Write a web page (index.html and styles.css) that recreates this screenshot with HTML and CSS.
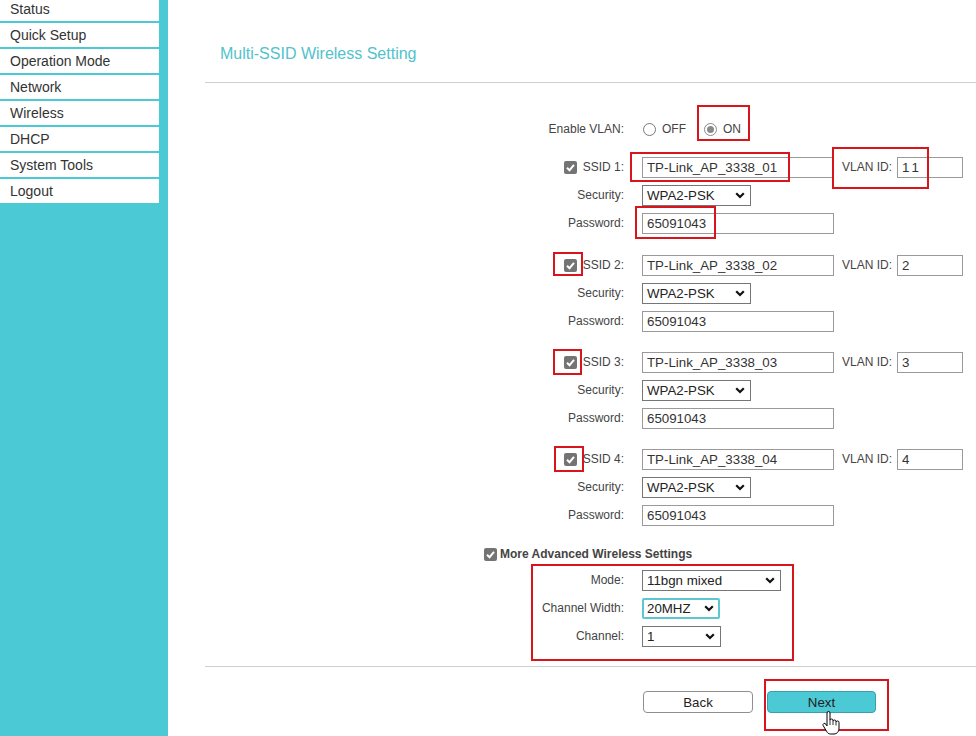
FILE: index.html
```html
<!DOCTYPE html>
<html>
<head>
<meta charset="utf-8">
<title>Multi-SSID Wireless Setting</title>
<link rel="stylesheet" href="styles.css">
</head>
<body>
<div class="page">
  <aside class="sidebar">
    <ul class="menu">
      <li>Status</li>
      <li>Quick Setup</li>
      <li>Operation Mode</li>
      <li>Network</li>
      <li>Wireless</li>
      <li>DHCP</li>
      <li>System Tools</li>
      <li>Logout</li>
    </ul>
  </aside>
  <main class="main">
    <h1 class="title">Multi-SSID Wireless Setting</h1>
    <div class="rule"></div>
    <div class="form">
      <div class="row">
        <div class="lbl">Enable VLAN:</div>
        <div class="field radios">
          <span class="radio"></span><span class="rtext">OFF</span>
          <span class="radio on"></span><span class="rtext">ON</span>
        </div>
      </div>

      <div class="group g1">
        <div class="row">
          <div class="lbl"><span class="cb"><svg viewBox="0 0 13 13" width="13" height="13"><path d="M3 6.8 L5.5 9.2 L10 3.8" fill="none" stroke="#fff" stroke-width="2"/></svg></span><span>SSID 1:</span></div>
          <div class="field"><input class="txt" value="TP-Link_AP_3338_01"></div>
          <div class="vlan-lbl">VLAN ID:</div>
          <input class="txt vlan spaced" value="11">
        </div>
        <div class="row">
          <div class="lbl">Security:</div>
          <div class="field"><div class="sel sec"><span>WPA2-PSK</span><svg class="chev" viewBox="0 0 10 7" width="10" height="7"><path d="M1.2 1.2 L5 5 L8.8 1.2" fill="none" stroke="#111" stroke-width="2.2"/></svg></div></div>
        </div>
        <div class="row">
          <div class="lbl">Password:</div>
          <div class="field"><input class="txt" value="65091043"></div>
        </div>
      </div>

      <div class="group g2">
        <div class="row">
          <div class="lbl"><span class="cb"><svg viewBox="0 0 13 13" width="13" height="13"><path d="M3 6.8 L5.5 9.2 L10 3.8" fill="none" stroke="#fff" stroke-width="2"/></svg></span><span>SSID 2:</span></div>
          <div class="field"><input class="txt" value="TP-Link_AP_3338_02"></div>
          <div class="vlan-lbl">VLAN ID:</div>
          <input class="txt vlan" value="2">
        </div>
        <div class="row">
          <div class="lbl">Security:</div>
          <div class="field"><div class="sel sec"><span>WPA2-PSK</span><svg class="chev" viewBox="0 0 10 7" width="10" height="7"><path d="M1.2 1.2 L5 5 L8.8 1.2" fill="none" stroke="#111" stroke-width="2.2"/></svg></div></div>
        </div>
        <div class="row">
          <div class="lbl">Password:</div>
          <div class="field"><input class="txt" value="65091043"></div>
        </div>
      </div>

      <div class="group g3">
        <div class="row">
          <div class="lbl"><span class="cb"><svg viewBox="0 0 13 13" width="13" height="13"><path d="M3 6.8 L5.5 9.2 L10 3.8" fill="none" stroke="#fff" stroke-width="2"/></svg></span><span>SSID 3:</span></div>
          <div class="field"><input class="txt" value="TP-Link_AP_3338_03"></div>
          <div class="vlan-lbl">VLAN ID:</div>
          <input class="txt vlan" value="3">
        </div>
        <div class="row">
          <div class="lbl">Security:</div>
          <div class="field"><div class="sel sec"><span>WPA2-PSK</span><svg class="chev" viewBox="0 0 10 7" width="10" height="7"><path d="M1.2 1.2 L5 5 L8.8 1.2" fill="none" stroke="#111" stroke-width="2.2"/></svg></div></div>
        </div>
        <div class="row">
          <div class="lbl">Password:</div>
          <div class="field"><input class="txt" value="65091043"></div>
        </div>
      </div>

      <div class="group g4">
        <div class="row">
          <div class="lbl"><span class="cb"><svg viewBox="0 0 13 13" width="13" height="13"><path d="M3 6.8 L5.5 9.2 L10 3.8" fill="none" stroke="#fff" stroke-width="2"/></svg></span><span>SSID 4:</span></div>
          <div class="field"><input class="txt" value="TP-Link_AP_3338_04"></div>
          <div class="vlan-lbl">VLAN ID:</div>
          <input class="txt vlan" value="4">
        </div>
        <div class="row">
          <div class="lbl">Security:</div>
          <div class="field"><div class="sel sec"><span>WPA2-PSK</span><svg class="chev" viewBox="0 0 10 7" width="10" height="7"><path d="M1.2 1.2 L5 5 L8.8 1.2" fill="none" stroke="#111" stroke-width="2.2"/></svg></div></div>
        </div>
        <div class="row">
          <div class="lbl">Password:</div>
          <div class="field"><input class="txt" value="65091043"></div>
        </div>
      </div>

      <div class="adv-head">
        <span class="cb"><svg viewBox="0 0 13 13" width="13" height="13"><path d="M3 6.8 L5.5 9.2 L10 3.8" fill="none" stroke="#fff" stroke-width="2"/></svg></span>
        <span>More Advanced Wireless Settings</span>
      </div>
      <div class="adv">
        <div class="row">
          <div class="lbl">Mode:</div>
          <div class="field"><div class="sel mode"><span>11bgn mixed</span><svg class="chev" viewBox="0 0 10 7" width="10" height="7"><path d="M1.2 1.2 L5 5 L8.8 1.2" fill="none" stroke="#111" stroke-width="2.2"/></svg></div></div>
        </div>
        <div class="row">
          <div class="lbl">Channel Width:</div>
          <div class="field"><div class="sel cw focus"><span>20MHZ</span><svg class="chev" viewBox="0 0 10 7" width="10" height="7"><path d="M1.2 1.2 L5 5 L8.8 1.2" fill="none" stroke="#111" stroke-width="2.2"/></svg></div></div>
        </div>
        <div class="row">
          <div class="lbl">Channel:</div>
          <div class="field"><div class="sel ch"><span>1</span><svg class="chev" viewBox="0 0 10 7" width="10" height="7"><path d="M1.2 1.2 L5 5 L8.8 1.2" fill="none" stroke="#111" stroke-width="2.2"/></svg></div></div>
        </div>
      </div>
    </div>
    <div class="rule rule-bottom"></div>
    <div class="buttons">
      <button class="btn back">Back</button>
      <button class="btn next">Next</button>
    </div>
  </main>
</div>

<div class="marks">
  <div class="mark m-on"></div>
  <div class="mark m-ssid1"></div>
  <div class="mark m-vlan"></div>
  <div class="mark m-pw"></div>
  <div class="mark m-cb2"></div>
  <div class="mark m-cb3"></div>
  <div class="mark m-cb4"></div>
  <div class="mark m-adv"></div>
  <div class="mark m-next"></div>
  <svg class="cursor" viewBox="0 0 20 25" width="20" height="25"><path d="M6 2 a1.5 1.5 0 0 1 3 0 v7.5 a1.5 1.5 0 0 1 3 0 v1 a1.5 1.5 0 0 1 3 0 v1 a1.5 1.5 0 0 1 3 0 v5.5 c0 3.5 -2 6 -5 6 h-3.5 c-2 0 -3 -1 -4 -2.8 l-3.3 -5.6 a1.5 1.5 0 0 1 2.6 -1.5 l1.2 1.8 z" fill="#fff" stroke="#000" stroke-width="1"/><path d="M9 10 v4 M12 11 v3 M15 12 v2.5" stroke="#000" stroke-width="0.8"/></svg>
</div>
</body>
</html>
```

FILE: styles.css
```css
html, body {
  margin: 0;
  padding: 0;
  height: 100%;
  overflow: hidden;
}
body {
  background: #fff;
  font-family: "Liberation Sans", Arial, sans-serif;
  color: #333;
  position: relative;
}
.page {
  display: flex;
  height: 736px;
}
.sidebar {
  width: 168px;
  flex: 0 0 168px;
  background: #4bc9d4;
  overflow: hidden;
}
.menu {
  list-style: none;
  margin: -3px 0 0 0;
  padding: 0;
}
.menu li {
  width: 149px;
  height: 24px;
  line-height: 24px;
  margin-bottom: 2px;
  background: #fff;
  padding-left: 10px;
  font-size: 14px;
  color: #333;
}
.main {
  flex: 1;
  min-width: 0;
}
.title {
  margin: 0;
  padding: 44px 0 0 52px;
  font-size: 16px;
  line-height: 20px;
  font-weight: normal;
  color: #52c2cc;
}
.rule {
  margin: 18px 0 0 37px;
  border-top: 1px solid #cfcfcf;
  height: 0;
}
.form {
  margin: 32px 0 0 286px;
}
.row {
  display: flex;
  align-items: center;
  height: 28px;
}
.lbl {
  width: 170px;
  display: flex;
  justify-content: flex-end;
  align-items: center;
  font-size: 12px;
  color: #444;
  white-space: nowrap;
}
.lbl .cb {
  margin-right: 6px;
}
.field {
  margin-left: 18px;
  display: flex;
  align-items: center;
}
.radios {
  font-size: 12px;
  color: #444;
}
.radio {
  width: 11px;
  height: 11px;
  border: 1px solid #777;
  border-radius: 50%;
  background: #fff;
  margin-left: 1px;
  position: relative;
}
.radio.on {
  margin-left: 18px;
  border-color: #8a8a8a;
}
.radio.on::after {
  content: "";
  position: absolute;
  left: 2px;
  top: 2px;
  width: 7px;
  height: 7px;
  border-radius: 50%;
  background: #8a8a8a;
}
.rtext {
  margin-left: 6px;
}
.cb {
  display: inline-flex;
  width: 13px;
  height: 13px;
  border-radius: 2px;
  background: #747474;
}
.cb svg {
  display: block;
}
.txt {
  box-sizing: border-box;
  width: 192px;
  height: 21px;
  border: 1px solid #9a9a9a;
  border-radius: 0;
  padding: 0 4px;
  margin: 0;
  font-family: "Liberation Sans", Arial, sans-serif;
  font-size: 13.3px;
  color: #333;
  background: #fff;
  outline: none;
}
.vlan-lbl {
  margin-left: 8px;
  width: 55px;
  font-size: 12px;
  color: #444;
}
.txt.vlan {
  width: 66px;
}
.txt.spaced {
  letter-spacing: 3px;
}
.g1 { margin-top: 10px; }
.g2 { margin-top: 14px; }
.g3 { margin-top: 13px; }
.g4 { margin-top: 13px; }
.sel {
  box-sizing: border-box;
  height: 21px;
  border: 1px solid #767676;
  display: flex;
  align-items: center;
  justify-content: space-between;
  padding: 0 5px 0 4px;
  font-size: 13.3px;
  color: #222;
  background: #fff;
}
.sel.sec { width: 109px; }
.sel.mode { width: 139px; }
.sel.cw { width: 78px; }
.sel.ch { width: 79px; }
.sel.focus {
  border: 2px solid #5cc7cf;
  border-radius: 2px;
  padding: 0 4px 0 3px;
}
.chev {
  display: block;
}
.adv-head {
  margin: 15px 0 0 30px;
  height: 20px;
  display: flex;
  align-items: center;
  font-size: 12px;
  font-weight: bold;
  color: #444;
}
.adv-head .cb {
  margin-right: 3px;
}
.adv {
  margin-top: 2px;
}
.rule-bottom {
  margin-top: 16px;
}
.buttons {
  display: flex;
  margin: 24px 0 0 475px;
}
.btn {
  box-sizing: border-box;
  height: 22px;
  border-radius: 4px;
  font-family: "Liberation Sans", Arial, sans-serif;
  font-size: 13.3px;
  color: #222;
  padding: 0;
  margin: 0;
}
.btn.back {
  width: 110px;
  background: #fff;
  border: 1px solid #8f8f8f;
}
.btn.next {
  width: 109px;
  margin-left: 14px;
  background: #4bc9d4;
  border: 1px solid #3c9fa8;
}
.marks {
  position: absolute;
  left: 0;
  top: 0;
  width: 976px;
  height: 736px;
  pointer-events: none;
}
.mark {
  position: absolute;
  box-sizing: border-box;
  border: 2px solid #d8141c;
}
.m-on { left: 697px; top: 105px; width: 53px; height: 36px; }
.m-ssid1 { left: 630px; top: 152px; width: 160px; height: 30px; }
.m-vlan { left: 832px; top: 147px; width: 97px; height: 42px; }
.m-pw { left: 635px; top: 206px; width: 81px; height: 33px; }
.m-cb2 { left: 553px; top: 252px; width: 30px; height: 24px; }
.m-cb3 { left: 553px; top: 349px; width: 29px; height: 26px; }
.m-cb4 { left: 554px; top: 446px; width: 30px; height: 26px; }
.m-adv { left: 531px; top: 564px; width: 263px; height: 97px; }
.m-next { left: 764px; top: 679px; width: 125px; height: 52px; }
.cursor {
  position: absolute;
  left: 821px;
  top: 711px;
}
```
